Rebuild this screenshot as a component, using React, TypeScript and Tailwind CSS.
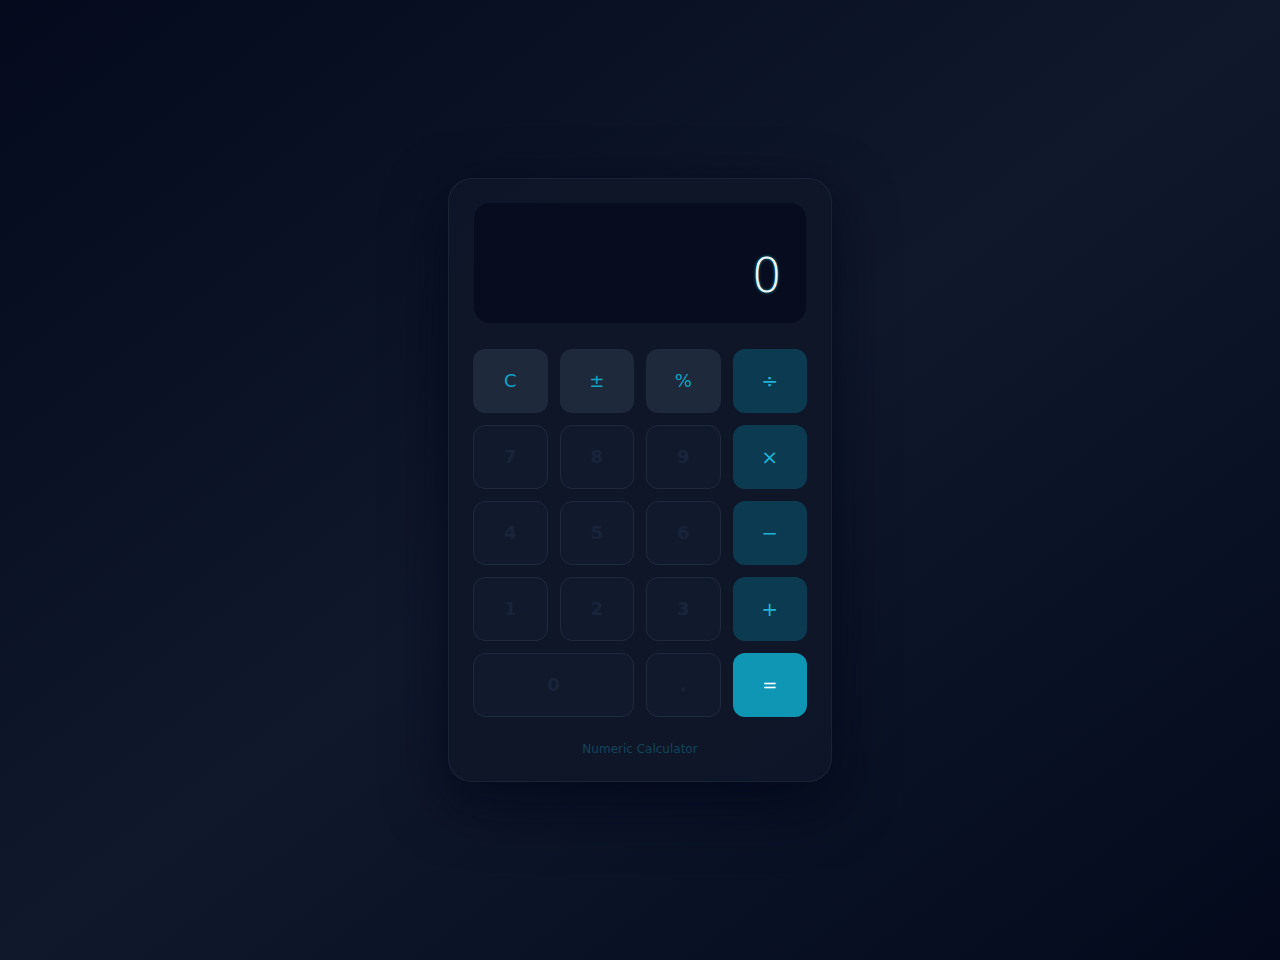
import { useState } from "react";

type Kind = "fn" | "num" | "op" | "eq";

const keys: { label: string; kind: Kind; wide?: boolean }[] = [
  { label: "C", kind: "fn" },
  { label: "±", kind: "fn" },
  { label: "%", kind: "fn" },
  { label: "÷", kind: "op" },
  { label: "7", kind: "num" },
  { label: "8", kind: "num" },
  { label: "9", kind: "num" },
  { label: "×", kind: "op" },
  { label: "4", kind: "num" },
  { label: "5", kind: "num" },
  { label: "6", kind: "num" },
  { label: "−", kind: "op" },
  { label: "1", kind: "num" },
  { label: "2", kind: "num" },
  { label: "3", kind: "num" },
  { label: "+", kind: "op" },
  { label: "0", kind: "num", wide: true },
  { label: ".", kind: "num" },
  { label: "=", kind: "eq" },
];

const kindClass: Record<Kind, string> = {
  fn: "bg-[#1e293b] text-[#0ea5c6] text-lg",
  num: "border border-[#1e293b] bg-[#111a2d] text-[#19233a] text-lg font-bold",
  op: "bg-[#0c3a50] text-[#1fb4d6] text-xl",
  eq: "bg-[#0f96b5] text-white text-lg",
};

export default function App() {
  const [display] = useState("0");

  return (
    <div
      className="flex min-h-screen items-center justify-center bg-gradient-to-br from-[#050a1d] via-[#10182c] to-[#040a1c]"
      style={{ fontFamily: '"DejaVu Sans", Verdana, sans-serif' }}
    >
      <div className="w-[384px] rounded-[24px] border border-[#1e293b]/70 bg-[#0f1628]/95 p-6 shadow-[0_20px_60px_rgba(2,6,23,0.7)]">
        <div className="mx-px flex h-[120px] items-end justify-end rounded-2xl bg-[#070d1e] px-6 pb-6">
          <span className="text-[48px] font-extralight leading-none text-[#f0faff] [text-shadow:0_0_3px_rgba(34,211,238,0.7)]">
            {display}
          </span>
        </div>

        <div className="mt-[26px] grid grid-cols-4 gap-3">
          {keys.map((k) => (
            <button
              key={k.label}
              className={`flex h-16 items-center justify-center rounded-xl ${kindClass[k.kind]} ${
                k.wide ? "col-span-2" : ""
              }`}
            >
              {k.label}
            </button>
          ))}
        </div>

        <p className="mt-6 text-center text-xs text-[#14445a]">Numeric Calculator</p>
      </div>
    </div>
  );
}
